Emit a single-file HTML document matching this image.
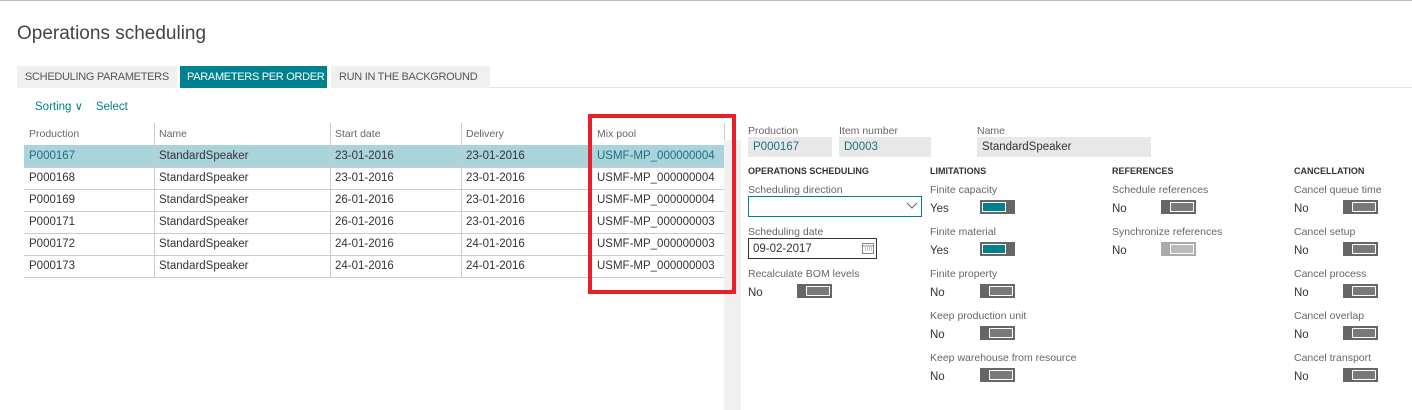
<!DOCTYPE html>
<html><head><style>
*{margin:0;padding:0;box-sizing:border-box}
body{width:1412px;height:410px;background:#fff;font-family:"Liberation Sans",sans-serif;position:relative;overflow:hidden;color:#333}
.a{position:absolute;white-space:nowrap}
.lbl{font-size:10.5px;color:#666}
.val{font-size:11.5px;color:#333}
.hd{font-size:9px;font-weight:bold;color:#333}
.tg{position:absolute;width:35px;height:14px;background:#666}
.tg i{position:absolute;top:2px;height:10px;border:1px solid #fff;background:#7a7a7a}
.tg.n i{left:9px;width:24px}
.tg.y i{left:2px;width:24px;background:#00818f}
.tg.d{background:#aaa}.tg.d i{background:#bbb}
.c{position:absolute;font-size:11.5px;color:#333;white-space:nowrap}
.tab{position:absolute;top:66px;height:22px;font-size:11px;line-height:22px;letter-spacing:-0.3px;overflow:hidden}
</style></head><body>
<div class="a" style="left:0;top:0;width:1412px;height:1px;background:#bbb"></div>
<div class="a" style="left:17px;top:23px;font-size:19px;color:#444">Operations scheduling</div>
<div class="tab" style="left:17px;width:160px;background:#f0f0f0;color:#555;padding-left:8px">SCHEDULING PARAMETERS</div>
<div class="tab" style="left:180px;width:147px;background:#00818f;color:#fff;padding-left:7px">PARAMETERS PER ORDER</div>
<div class="tab" style="left:331px;width:159px;background:#f0f0f0;color:#555;padding-left:8px">RUN IN THE BACKGROUND</div>
<div class="a" style="left:490px;top:87px;width:922px;height:1px;background:#e6e6e6"></div>
<div class="a" style="left:35px;top:99px;font-size:11.5px;color:#00818f">Sorting &#8744;&nbsp;&nbsp;&nbsp; Select</div>

<div class="a" style="left:24px;top:145px;width:700px;height:22px;background:#aad3db"></div>
<div class="a" style="left:154px;top:123px;width:1px;height:154px;background:#ccc"></div>
<div class="a" style="left:330px;top:123px;width:1px;height:154px;background:#ccc"></div>
<div class="a" style="left:461px;top:123px;width:1px;height:154px;background:#ccc"></div>
<div class="a" style="left:590px;top:123px;width:1px;height:154px;background:#ccc"></div>
<div class="a" style="left:724px;top:123px;width:1px;height:154px;background:#ccc"></div>
<div class="a" style="left:724px;top:140px;width:17px;height:270px;background:#f0f0f0"></div>
<div class="c" style="left:29px;top:128px;font-size:10.5px;color:#666">Production</div>
<div class="c" style="left:159px;top:128px;font-size:10.5px;color:#666">Name</div>
<div class="c" style="left:335px;top:128px;font-size:10.5px;color:#666">Start date</div>
<div class="c" style="left:466px;top:128px;font-size:10.5px;color:#666">Delivery</div>
<div class="c" style="left:597px;top:128px;font-size:10.5px;color:#666">Mix pool</div>
<div id="rows"></div>
<script>
var d=[["P000167","23-01-2016","23-01-2016","4"],["P000168","23-01-2016","23-01-2016","4"],["P000169","26-01-2016","23-01-2016","4"],["P000171","26-01-2016","23-01-2016","3"],["P000172","24-01-2016","24-01-2016","3"],["P000173","24-01-2016","24-01-2016","3"]];
var h="";d.forEach(function(r,i){var t=145+i*22,col=i==0?"#1b6f80":"#333";
h+='<div class="a" style="left:24px;top:'+(t+22)+'px;width:700px;height:1px;background:#ccc"></div>';
h+='<div class="c" style="left:29px;top:'+(t+5)+'px;color:'+col+'">'+r[0]+'</div>';
h+='<div class="c" style="left:159px;top:'+(t+5)+'px">StandardSpeaker</div>';
h+='<div class="c" style="left:335px;top:'+(t+5)+'px">'+r[1]+'</div>';
h+='<div class="c" style="left:466px;top:'+(t+5)+'px">'+r[2]+'</div>';
h+='<div class="c" style="left:597px;top:'+(t+5)+'px;color:'+col+'">USMF-MP_00000000'+r[3]+'</div>';});
document.getElementById("rows").innerHTML=h;
</script>
<div class="a" style="left:588px;top:114px;width:148px;height:180px;border:4px solid #e8202a"></div>

<div class="a lbl" style="left:748px;top:125px">Production</div>
<div class="a lbl" style="left:839px;top:125px">Item number</div>
<div class="a lbl" style="left:977px;top:125px">Name</div>
<div class="a" style="left:748px;top:137px;width:84px;height:20px;background:#e8e8e8;font-size:11.5px;color:#1b6f80;padding:4px 5px">P000167</div>
<div class="a" style="left:839px;top:137px;width:92px;height:20px;background:#e8e8e8;font-size:11.5px;color:#1b6f80;padding:4px 5px">D0003</div>
<div class="a" style="left:977px;top:137px;width:174px;height:20px;background:#e8e8e8;font-size:11.5px;color:#333;padding:4px 5px">StandardSpeaker</div>

<div class="a hd" style="left:748px;top:166px">OPERATIONS SCHEDULING</div>
<div class="a hd" style="left:930px;top:166px">LIMITATIONS</div>
<div class="a hd" style="left:1112px;top:166px">REFERENCES</div>
<div class="a hd" style="left:1294px;top:166px">CANCELLATION</div>

<div class="a lbl" style="left:748px;top:184px">Scheduling direction</div>
<div class="a" style="left:748px;top:196px;width:174px;height:21px;border:1px solid #00818f"></div>
<svg class="a" style="left:906px;top:201px" width="12" height="9"><path d="M1 2 L6 7 L11 2" fill="none" stroke="#666" stroke-width="1"/></svg>
<div class="a lbl" style="left:748px;top:226px">Scheduling date</div>
<div class="a" style="left:748px;top:238px;width:129px;height:21px;border:1px solid #333;font-size:11.5px;padding:4px 4px">09-02-2017</div>
<svg class="a" style="left:862px;top:242px" width="12" height="12"><rect x="0.5" y="1.5" width="11" height="10" fill="none" stroke="#888"/><path d="M0 4h12M3 6h1M5 6h1M7 6h1M9 6h1M3 8h1M5 8h1M7 8h1M9 8h1" stroke="#888"/></svg>
<div class="a lbl" style="left:748px;top:268px">Recalculate BOM levels</div>
<div class="a val" style="left:748px;top:287px">No</div>
<div class="tg n" style="left:797px;top:284px"><i></i></div>

<div class="a lbl" style="left:930px;top:184px">Finite capacity</div>
<div class="a val" style="left:930px;top:203px">Yes</div>
<div class="tg y" style="left:980px;top:200px"><i></i></div>
<div class="a lbl" style="left:930px;top:226px">Finite material</div>
<div class="a val" style="left:930px;top:245px">Yes</div>
<div class="tg y" style="left:980px;top:242px"><i></i></div>
<div class="a lbl" style="left:930px;top:268px">Finite property</div>
<div class="a val" style="left:930px;top:287px">No</div>
<div class="tg n" style="left:980px;top:284px"><i></i></div>
<div class="a lbl" style="left:930px;top:310px">Keep production unit</div>
<div class="a val" style="left:930px;top:329px">No</div>
<div class="tg n" style="left:980px;top:326px"><i></i></div>
<div class="a lbl" style="left:930px;top:352px">Keep warehouse from resource</div>
<div class="a val" style="left:930px;top:371px">No</div>
<div class="tg n" style="left:980px;top:368px"><i></i></div>

<div class="a lbl" style="left:1112px;top:184px">Schedule references</div>
<div class="a val" style="left:1112px;top:203px">No</div>
<div class="tg n" style="left:1161px;top:200px"><i></i></div>
<div class="a lbl" style="left:1112px;top:226px">Synchronize references</div>
<div class="a val" style="left:1112px;top:245px">No</div>
<div class="tg n d" style="left:1161px;top:242px"><i></i></div>

<div class="a lbl" style="left:1294px;top:184px">Cancel queue time</div>
<div class="a val" style="left:1294px;top:203px">No</div>
<div class="tg n" style="left:1343px;top:200px"><i></i></div>
<div class="a lbl" style="left:1294px;top:226px">Cancel setup</div>
<div class="a val" style="left:1294px;top:245px">No</div>
<div class="tg n" style="left:1343px;top:242px"><i></i></div>
<div class="a lbl" style="left:1294px;top:268px">Cancel process</div>
<div class="a val" style="left:1294px;top:287px">No</div>
<div class="tg n" style="left:1343px;top:284px"><i></i></div>
<div class="a lbl" style="left:1294px;top:310px">Cancel overlap</div>
<div class="a val" style="left:1294px;top:329px">No</div>
<div class="tg n" style="left:1343px;top:326px"><i></i></div>
<div class="a lbl" style="left:1294px;top:352px">Cancel transport</div>
<div class="a val" style="left:1294px;top:371px">No</div>
<div class="tg n" style="left:1343px;top:368px"><i></i></div>
</body></html>
